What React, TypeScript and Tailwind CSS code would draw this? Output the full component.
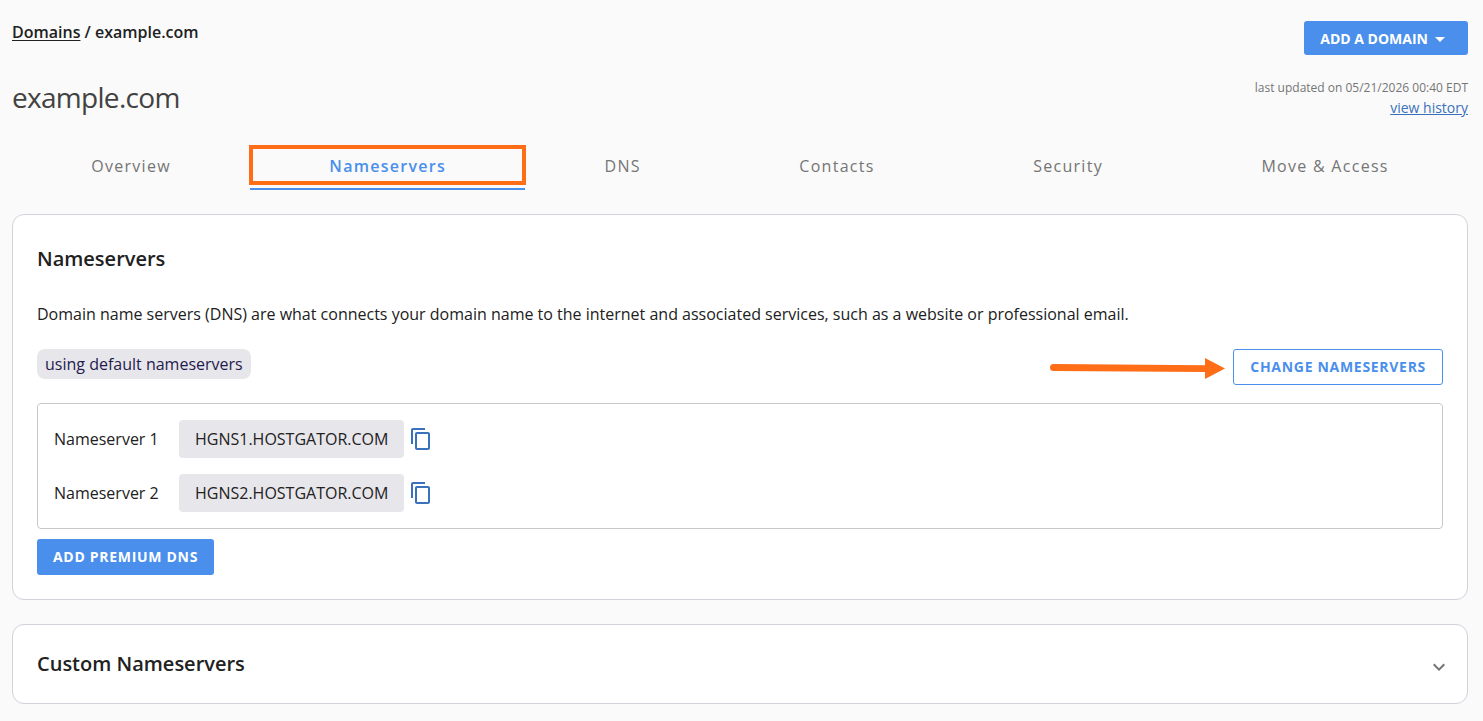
import { MdArrowDropDown, MdContentCopy, MdExpandMore } from "react-icons/md";

const tabs = ["Overview", "Nameservers", "DNS", "Contacts", "Security", "Move & Access"];

const nameservers = [
  { label: "Nameserver 1", host: "HGNS1.HOSTGATOR.COM" },
  { label: "Nameserver 2", host: "HGNS2.HOSTGATOR.COM" },
];

function Header() {
  return (
    <header>
      <div className="flex items-start justify-between">
        <nav aria-label="Breadcrumb" className="text-base font-semibold leading-[22px]">
          <a href="#domains" className="underline underline-offset-2">Domains</a> / example.com
        </nav>
        <button
          type="button"
          className="flex h-[34px] items-center rounded-[3px] bg-[#4a8fec] px-4 pt-0.5 text-sm font-bold text-white"
        >
          ADD A DOMAIN
          <MdArrowDropDown className="size-6" aria-hidden="true" />
        </button>
      </div>
      <div className="mt-6 flex items-start justify-between">
        <h1 className="text-[28px] leading-9 tracking-tight text-[#424242]">example.com</h1>
        <div className="text-right">
          <p className="text-xs leading-[18px] text-[#757575]">last updated on 05/21/2026 00:40 EDT</p>
          <a href="#history" className="block text-sm leading-[22px] text-[#3a71bd] underline">
            view history
          </a>
        </div>
      </div>
    </header>
  );
}

function Tabs() {
  return (
    <nav aria-label="Domain sections" className="mt-[23px] flex">
      {tabs.map((tab) =>
        tab === "Nameservers" ? (
          <a
            key={tab}
            href="#nameservers"
            aria-current="page"
            className="relative flex h-12 flex-auto items-center justify-center border-y-2 border-transparent border-b-[#4a8fec] text-base font-semibold tracking-[0.08em] text-[#4a8fec]"
          >
            {tab}
            <span className="absolute -inset-x-px top-px h-10 border-4 border-[#ff6d17]" />
          </a>
        ) : (
          <a
            key={tab}
            href={"#" + tab.toLowerCase()}
            className="flex h-12 flex-auto items-center justify-center border-y-2 border-transparent text-base tracking-[0.08em] text-[#757575]"
          >
            {tab}
          </a>
        ),
      )}
    </nav>
  );
}

function Arrow() {
  return (
    <svg
      className="absolute right-full top-2 mr-2 h-[22px] w-[175px]"
      viewBox="0 0 175 22"
      fill="#ff6d17"
      aria-hidden="true"
    >
      <path d="M3.5 7 L155 8.2 V1 L175 11.5 L155 22 V15 L3.5 14 A3.5 3.5 0 0 1 3.5 7Z" />
    </svg>
  );
}

export default function App() {
  return (
    <div className="min-h-screen bg-[#fafafa] pb-4 pl-3 pr-[15px] pt-[21px] font-['Open_Sans','Noto_Sans',sans-serif] text-[#212121]">
      <Header />
      <Tabs />
      <main className="mt-6 flex flex-col gap-6">
        <section className="rounded-xl border border-[#d2d2db] bg-white p-6">
          <h2 className="text-xl font-semibold leading-10">Nameservers</h2>
          <p className="mt-6 text-base leading-[22px]">
            Domain name servers (DNS) are what connects your domain name to the internet and associated services, such
            as a website or professional email.
          </p>
          <div className="mt-6 flex items-start justify-between">
            <span className="rounded-lg bg-[#e7e6eb] px-2 text-base leading-[30px] text-[#1f1b4d]">
              using default nameservers
            </span>
            <div className="relative">
              <Arrow />
              <button
                type="button"
                className="h-9 rounded-[3px] border border-[#4a8fec] px-4 text-sm font-bold tracking-wider text-[#4a8fec]"
              >
                CHANGE NAMESERVERS
              </button>
            </div>
          </div>
          <dl className="mt-[18px] flex flex-col gap-4 rounded border border-[#c8c8c8] p-4">
            {nameservers.map(({ label, host }) => (
              <div key={host} className="flex items-center">
                <dt className="w-[125px]">{label}</dt>
                <dd className="flex items-center gap-[5px]">
                  <span className="rounded bg-[#e7e6eb] px-4 leading-[38px]">{host}</span>
                  <button type="button" aria-label={"Copy " + host} className="text-[#3a71bd]">
                    <MdContentCopy className="size-6" aria-hidden="true" />
                  </button>
                </dd>
              </div>
            ))}
          </dl>
          <button
            type="button"
            className="mt-2.5 block h-9 rounded-[3px] bg-[#4a8fec] px-4 text-sm font-bold tracking-wider text-white"
          >
            ADD PREMIUM DNS
          </button>
        </section>
        <section className="rounded-xl border border-[#d2d2db] bg-white">
          <h2 className="text-xl font-semibold">
            <button
              type="button"
              aria-expanded="false"
              className="flex w-full items-end justify-between py-6 pl-6 pr-4 text-left leading-[30px]"
            >
              Custom Nameservers
              <MdExpandMore className="size-6 text-[#757575]" aria-hidden="true" />
            </button>
          </h2>
        </section>
      </main>
    </div>
  );
}
